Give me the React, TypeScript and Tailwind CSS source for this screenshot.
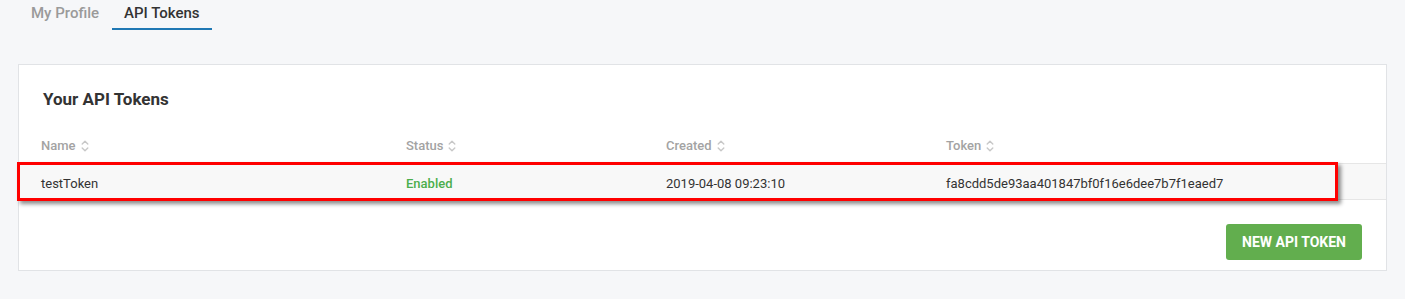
import React from 'react'

function SortIcon() {
  return (
    <svg viewBox="0 0 8 14" fill="none" stroke="#c8c8c8" strokeWidth={1.4} className="ml-[5px] h-[14px] w-[8px]">
      <path strokeLinecap="round" strokeLinejoin="round" d="M1.2 5 4 2.2 6.8 5M1.2 9 4 11.8 6.8 9" />
    </svg>
  )
}

const columns = ['Name', 'Status', 'Created', 'Token']

export default function App() {
  return (
    <div className="min-h-[299px] bg-[#f6f7f9] pb-[29px] text-[#333]" style={{ fontFamily: 'Roboto, "Liberation Sans", sans-serif' }}>
      {/* tabs */}
      <div className="flex h-[30px] pl-[19px]">
        <button className="h-full px-[12px] pb-[4px] text-[15px] font-medium text-[#9a9a9a]">My Profile</button>
        <button className="ml-[1px] h-full border-b-2 border-[#1f78b4] px-[12px] pb-[2px] text-[15px] font-medium text-[#333]">API Tokens</button>
      </div>

      {/* card */}
      <div className="mx-[18px] mt-[34px] h-[207px] border border-[#e1e3e6] bg-white">
        <h2 className="px-[24px] pt-[23px] text-[17px] font-bold leading-[22px] text-[#333]">Your API Tokens</h2>

        <div className="relative mt-[19px]">
          <div className="grid h-[35px] grid-cols-[365px_260px_280px_1fr] items-center border-b border-[#e6e6e6] text-[13px] font-medium text-[#a3a3a3]">
            {columns.map((c) => (
              <div key={c} className="flex items-center pl-[22px]">
                {c}
                <SortIcon />
              </div>
            ))}
          </div>
          <div className="grid h-[36px] grid-cols-[365px_260px_280px_1fr] items-center border-b border-[#e6e6e6] bg-[#f8f8f8] pt-[4px] text-[13px] text-[#333]">
            <div className="pl-[22px]">testToken</div>
            <div className="pl-[22px] font-medium text-[#4cae4c]">Enabled</div>
            <div className="pl-[22px]">2019-04-08 09:23:10</div>
            <div className="pl-[22px]">fa8cdd5de93aa401847bf0f16e6dee7b7f1eaed7</div>
          </div>

          {/* annotation box */}
          <div className="pointer-events-none absolute left-[-2px] top-[33px] h-[39px] w-[1321px] border-[3px] border-[#ff0000] shadow-[3px_3px_4px_rgba(0,0,0,0.45)]" />
        </div>

        <div className="flex justify-end pr-[24px] pt-[24px]">
          <button className="h-[36px] w-[136px] rounded-[3px] bg-[#62ae4e] text-[14px] font-bold text-white">NEW API TOKEN</button>
        </div>
      </div>
    </div>
  )
}
